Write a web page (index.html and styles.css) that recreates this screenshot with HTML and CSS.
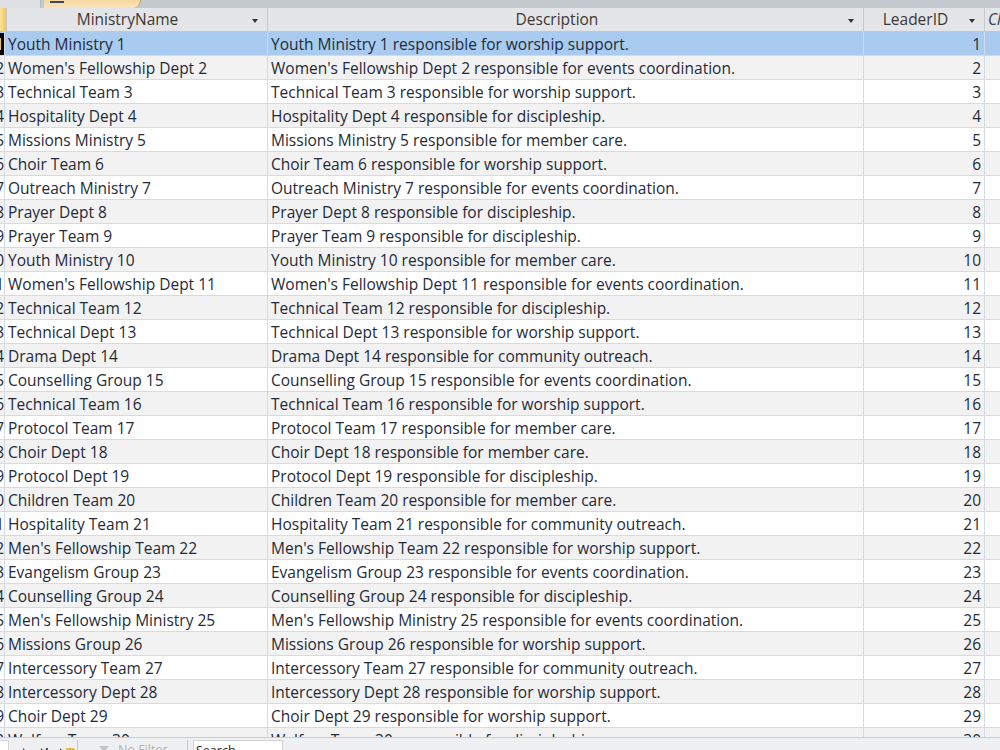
FILE: index.html
```html
<!DOCTYPE html>
<html lang="en">
<head>
    <meta charset="UTF-8">
    <title>Ministries</title>
    <link rel="stylesheet" href="styles.css">
</head>
<body>
    <div class="window">
        <div class="tabstrip">
            <div class="tab-off"></div>
            <div class="tab-on"><span class="tab-icon"></span></div>
        </div>

        <div class="row head">
            <div class="cell sel-head"></div>
            <div class="cell hcell"><span class="hlabel">MinistryName</span><span class="arrow"></span></div>
            <div class="cell hcell"><span class="hlabel">Description</span><span class="arrow"></span></div>
            <div class="cell hcell"><span class="hlabel">LeaderID</span><span class="arrow"></span></div>
            <div class="cell hcell add"><span>Click to Add</span></div>
        </div>

        <div class="grid" id="grid"></div>

        <div class="navbar">
            <div class="navgroup">
                <span class="recbox"></span>
                <svg class="nav-ico" width="10" height="10" viewBox="0 0 10 10"><path d="M3 1 L7 5 L3 9 Z" fill="#3a3a3a"/></svg>
                <svg class="nav-ico" width="12" height="10" viewBox="0 0 12 10"><path d="M2 1 L6 5 L2 9 Z" fill="#3a3a3a"/><rect x="7" y="1" width="2" height="8" fill="#3a3a3a"/></svg>
                <svg class="nav-ico" width="18" height="10" viewBox="0 0 18 10"><path d="M1 1 L5 5 L1 9 Z" fill="#3a3a3a"/><rect x="7" y="1" width="9" height="8" fill="#f5c842"/><path d="M8 2 L15 8 M15 2 L8 8 M11.5 1 L11.5 9" stroke="#b8860b" stroke-width="1"/></svg>
            </div>
            <div class="navgroup filter">
                <svg width="14" height="12" viewBox="0 0 14 12"><path d="M1 1 H11 L7 6 V11 L5 10 V6 Z" fill="#c4c4c4"/><path d="M9 7 L13 11 M13 7 L9 11" stroke="#c0c0c0" stroke-width="1.2"/></svg>
                <span>No Filter</span>
            </div>
            <div class="search">Search</div>
        </div>
    </div>

    <script>
        const rows = [
            ["Youth Ministry 1", "worship support."],
            ["Women's Fellowship Dept 2", "events coordination."],
            ["Technical Team 3", "worship support."],
            ["Hospitality Dept 4", "discipleship."],
            ["Missions Ministry 5", "member care."],
            ["Choir Team 6", "worship support."],
            ["Outreach Ministry 7", "events coordination."],
            ["Prayer Dept 8", "discipleship."],
            ["Prayer Team 9", "discipleship."],
            ["Youth Ministry 10", "member care."],
            ["Women's Fellowship Dept 11", "events coordination."],
            ["Technical Team 12", "discipleship."],
            ["Technical Dept 13", "worship support."],
            ["Drama Dept 14", "community outreach."],
            ["Counselling Group 15", "events coordination."],
            ["Technical Team 16", "worship support."],
            ["Protocol Team 17", "member care."],
            ["Choir Dept 18", "member care."],
            ["Protocol Dept 19", "discipleship."],
            ["Children Team 20", "member care."],
            ["Hospitality Team 21", "community outreach."],
            ["Men's Fellowship Team 22", "worship support."],
            ["Evangelism Group 23", "events coordination."],
            ["Counselling Group 24", "discipleship."],
            ["Men's Fellowship Ministry 25", "events coordination."],
            ["Missions Group 26", "worship support."],
            ["Intercessory Team 27", "community outreach."],
            ["Intercessory Dept 28", "worship support."],
            ["Choir Dept 29", "worship support."],
            ["Welfare Team 30", "discipleship."]
        ];

        const grid = document.getElementById('grid');
        rows.forEach((r, i) => {
            const n = i + 1;
            const row = document.createElement('div');
            row.className = 'row' + (n === 1 ? ' current' : (n % 2 === 0 ? ' alt' : ''));
            row.innerHTML =
                '<div class="cell idcell"><span>' + n + '</span></div>' +
                '<div class="cell">' + r[0] + '</div>' +
                '<div class="cell">' + r[0] + ' responsible for ' + r[1] + '</div>' +
                '<div class="cell num">' + n + '</div>' +
                '<div class="cell"></div>';
            grid.appendChild(row);
        });
    </script>
</body>
</html>
```

FILE: styles.css
```css
html, body { margin: 0; padding: 0; }
body { font-family: "Open Sans", "Noto Sans", sans-serif; font-size: 15.5px; color: #1f2b38; background: #fff; }

.window { width: 1000px; height: 750px; overflow: hidden; display: flex; flex-direction: column; }

/* document tab strip */
.tabstrip { height: 8px; flex: none; background: #c4c8cf; display: flex; align-items: flex-end; }
.tab-off { width: 40px; height: 8px; background: #dfe1e5; border-right: 1px solid #b7bbc2; }
.tab-on { width: 96px; height: 8px; margin-left: 3px; background: linear-gradient(#f6d7a0, #fbe4bb); border-radius: 0 0 8px 0; border-right: 1px solid #c59a5a; position: relative; }
.tab-icon { position: absolute; left: 6px; bottom: 5px; width: 14px; height: 2px; background: #3c4a5c; }

/* rows */
.row { display: grid; grid-template-columns: 5px 263px 596px 121px 1fr; height: 24px; box-sizing: border-box; border-bottom: 1px solid #d5dbe5; flex: none; }
.row.alt { background: #f2f2f2; }
.row.current { background: #a8cbef; }
.cell { border-right: 1px solid #d5dbe5; padding: 0 3px; line-height: 24px; white-space: nowrap; overflow: hidden; box-sizing: border-box; }
.cell:last-child { border-right: none; }
.num { text-align: right; }
.idcell { padding: 0; direction: rtl; text-align: right; }
.row.current .idcell span { background: #000; color: #fff; }

/* header */
.row.head { height: 24px; background: #e3e5e9; border-bottom: 1px solid #c3c8d0; color: #3d3833; }
.head .cell { border-right-color: #c6cad1; line-height: 23px; }
.sel-head { background: linear-gradient(90deg, #f9e49c, #f3c657); }
.hcell { display: flex; align-items: center; padding: 0 9px 0 3px; }
.hlabel { flex: 1; text-align: center; padding-right: 5px; }
.arrow { width: 0; height: 0; border-left: 3.5px solid transparent; border-right: 3.5px solid transparent; border-top: 4px solid #333; margin-top: 2px; }
.add { padding-left: 3px; font-style: italic; color: #3a3f4a; }

.grid { height: 705px; flex: none; overflow: hidden; }

/* record navigation bar */
.navbar { height: 22px; flex: none; background: #eff0f2; border-top: 1px solid #c9ccd2; display: flex; align-items: flex-start; padding-top: 2px; box-sizing: border-box; font-size: 12.5px; line-height: 18px; white-space: nowrap; }
.navgroup { display: flex; align-items: center; gap: 9px; height: 18px; width: 78px; border-right: 1px solid #c3c6cc; box-sizing: border-box; }
.recbox { width: 8px; height: 16px; background: #fff; border: 1px solid #d3d6db; border-left: none; margin-right: 2px; }
.nav-ico { margin-top: 6px; }
.filter { width: 110px; padding-left: 20px; gap: 6px; color: #b3b3b3; }
.filter span { margin-top: 1px; }
.filter svg { margin-top: 3px; }
.search { margin-left: 5px; width: 86px; height: 16px; background: #fff; border: 1px solid #d0d3d8; line-height: 20px; padding-left: 2px; color: #222; }
```
